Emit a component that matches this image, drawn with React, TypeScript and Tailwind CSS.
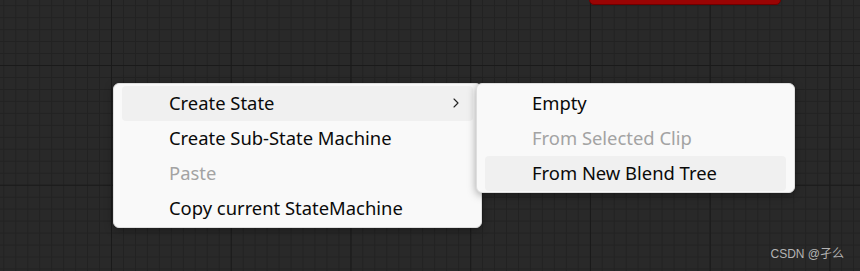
import React from 'react'
import { ChevronRight } from 'lucide-react'

type Item = { label: string; disabled?: boolean; active?: boolean; sub?: boolean }

const mainItems: Item[] = [
  { label: 'Create State', active: true, sub: true },
  { label: 'Create Sub-State Machine' },
  { label: 'Paste', disabled: true },
  { label: 'Copy current StateMachine' },
]

const subItems: Item[] = [
  { label: 'Empty' },
  { label: 'From Selected Clip', disabled: true },
  { label: 'From New Blend Tree', active: true },
]

function MenuRow({ item }: { item: Item }) {
  return (
    <div
      className={`h-[35px] flex items-center pb-[2px] pl-[47px] pr-[9px] rounded-[4px] ${item.active ? 'bg-[#f0f0f0]' : ''} ${item.disabled ? 'text-[#a3a3a3]' : 'text-[#0a0a0a]'}`}
    >
      <span className="flex-1 whitespace-nowrap">{item.label}</span>
      {item.sub && <ChevronRight size={16} strokeWidth={1.7} className="text-[#222]" />}
    </div>
  )
}

export default function App() {
  return (
    <div className="relative w-[860px] h-[271px] overflow-hidden bg-[#292929] [background-image:linear-gradient(to_right,#1a1a1a_1px,transparent_1px),linear-gradient(to_bottom,#1a1a1a_1px,transparent_1px),linear-gradient(to_right,#222_1px,transparent_1px),linear-gradient(to_bottom,#222_1px,transparent_1px)] [background-size:119.75px_119.75px,119.75px_119.75px,11.975px_11.975px,11.975px_11.975px] [background-position:111px_65px,111px_65px,111px_65px,111px_65px] font-['Noto_Sans','Segoe_UI',sans-serif]">
      {/* node peeking in at the top */}
      <div className="absolute left-[589px] top-[-10px] w-[192px] h-[15px] rounded-[5px] bg-[#9a0404] border border-[#6e0000]" />

      {/* context menu */}
      <div className="absolute left-[113px] top-[83px] w-[369px] pt-[2px] pb-[1px] px-[8px] bg-[#f9f9f9] border border-[#dedede] rounded-[6px] shadow-[0_2px_8px_rgba(0,0,0,0.35)] text-[18.4px]">
        {mainItems.map((it) => (
          <MenuRow key={it.label} item={it} />
        ))}
      </div>

      {/* submenu */}
      <div className="absolute left-[476px] top-[83px] w-[319px] pt-[2px] pb-[1px] px-[8px] bg-[#f9f9f9] border border-[#dedede] rounded-[6px] shadow-[0_2px_8px_rgba(0,0,0,0.35)] text-[18.4px]">
        {subItems.map((it) => (
          <MenuRow key={it.label} item={it} />
        ))}
      </div>

      <div className="absolute right-[16px] bottom-[8px] text-[12px] text-[#b4b4b4] font-['Liberation_Sans','Noto_Sans_CJK_SC',sans-serif]">
        CSDN @孑么
      </div>
    </div>
  )
}
